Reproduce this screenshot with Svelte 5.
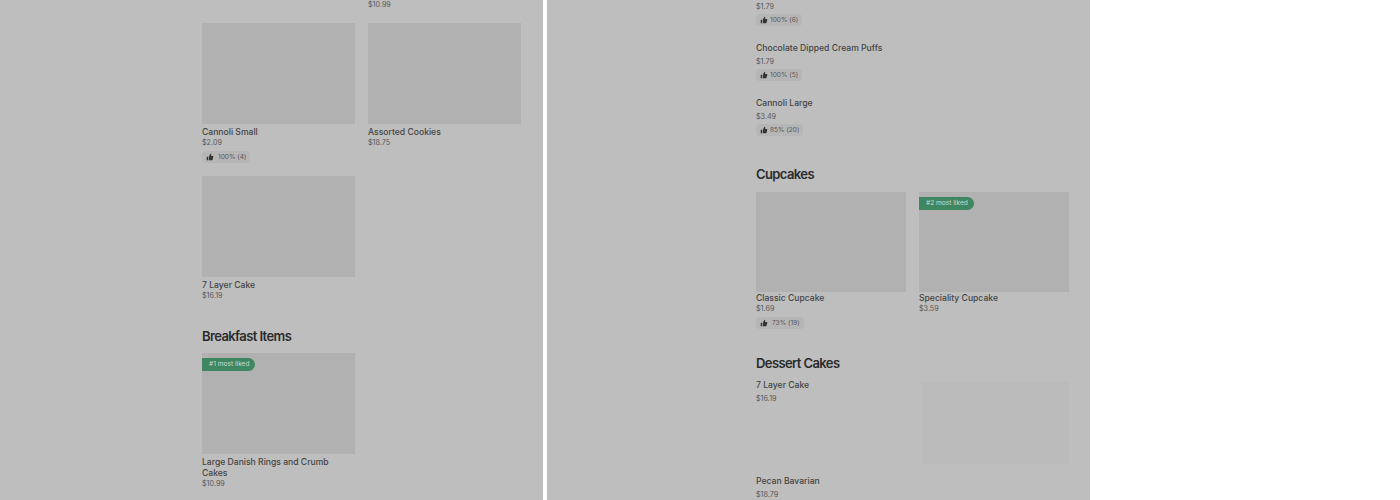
<script>
  const thumb = 'M1 5h2v5H1zM4 5l2-4c.8 0 1.3.6 1.2 1.4L7 4h2.2c.6 0 1 .6.8 1.2L9 9.4c-.1.4-.4.6-.8.6H4z';
</script>

{#snippet rating(text, wide)}
  <div class="rating" class:wide>
    <svg viewBox="0 0 11 11" width="8" height="8"><path d={thumb} /></svg>
    <span>{text}</span>
  </div>
{/snippet}

{#snippet card(name, price, score, badge, wide)}
  <div class="card">
    <div class="photo">
      {#if badge}<span class="badge">{badge}</span>{/if}
    </div>
    <div class="name">{name}</div>
    <div class="price">{price}</div>
    {#if score}{@render rating(score, wide)}{/if}
  </div>
{/snippet}

{#snippet row(name, price, score)}
  <div class="row">
    <div class="name">{name}</div>
    <div class="price roomy">{price}</div>
    {@render rating(score)}
  </div>
{/snippet}

<div class="page">
  <section class="panel left">
    <div class="grid top-cut">
      <div></div>
      <div class="price">$10.99</div>
    </div>
    <div class="grid first">
      {@render card('Cannoli Small', '$2.09', '100% (4)', null, true)}
      {@render card('Assorted Cookies', '$18.75')}
      {@render card('7 Layer Cake', '$16.19')}
    </div>
    <h2 class="breakfast">Breakfast Items</h2>
    <div class="grid">
      {@render card('Large Danish Rings and Crumb Cakes', '$10.99', null, '#1 most liked')}
    </div>
  </section>

  <section class="panel right">
    <div class="row cut">
      <div class="price">$1.79</div>
      {@render rating('100% (6)')}
    </div>
    {@render row('Chocolate Dipped Cream Puffs', '$1.79', '100% (5)')}
    {@render row('Cannoli Large', '$3.49', '85% (20)')}
    <h2 class="cupcakes">Cupcakes</h2>
    <div class="grid">
      {@render card('Classic Cupcake', '$1.69', '73% (19)', null, true)}
      {@render card('Speciality Cupcake', '$3.59', null, '#2 most liked')}
    </div>
    <h2 class="desserts">Dessert Cakes</h2>
    <div class="item">
      <div class="info">
        <div class="name">7 Layer Cake</div>
        <div class="price roomy">$16.19</div>
      </div>
      <div class="ghost"></div>
    </div>
    <div class="item-next">
      <div class="name">Pecan Bavarian</div>
      <div class="price roomy">$18.79</div>
    </div>
  </section>
</div>

<style>
  :global(body) {
    margin: 0;
    background: #fff;
  }

  .page {
    display: flex;
    gap: 4px;
    width: 1090px;
    height: 500px;
    overflow: hidden;
    font-family: Inter, 'Liberation Sans', sans-serif;
  }

  .panel {
    flex: 0 0 543px;
    box-sizing: border-box;
    height: 500px;
    overflow: hidden;
    background: #bebebe;
  }

  .left {
    padding-left: 202px;
    padding-right: 22px;
  }

  .right {
    padding-left: 209px;
    padding-right: 21px;
  }

  .grid {
    display: grid;
    grid-template-columns: 1fr 1fr;
    column-gap: 13px;
  }

  .top-cut {
    height: 23px;
  }

  .first {
    row-gap: 13px;
  }

  .first .card:nth-child(2) {
    align-self: start;
  }

  .photo {
    position: relative;
    height: 101px;
    background: #b1b1b1;
  }

  .right .photo {
    height: 100px;
  }

  .badge {
    position: absolute;
    top: 5px;
    left: 0;
    padding: 0 6px 0 7px;
    height: 13px;
    line-height: 13px;
    font-size: 6.6px;
    color: #c9ddd2;
    background: #3f8662;
    border-radius: 0 7px 7px 0;
    white-space: nowrap;
  }

  .name {
    margin-top: 2px;
    font-size: 8.6px;
    line-height: 11px;
    font-weight: 500;
    color: #444;
  }

  .left .card .name {
    margin-top: 3px;
  }

  .right .card .name,
  .item .name {
    margin-top: 1px;
  }

  .price {
    font-size: 7.2px;
    line-height: 10px;
    color: #585858;
  }

  .roomy {
    margin-top: 3px;
  }

  .rating {
    display: flex;
    align-items: center;
    gap: 2px;
    width: max-content;
    height: 12px;
    margin-top: 3px;
    padding: 0 4px;
    font-size: 6.6px;
    color: #585858;
    background: #b6b6b6;
    border-radius: 4px;
  }

  .row .rating {
    margin-top: 2px;
  }

  .rating.wide {
    gap: 4px;
  }

  .rating svg {
    fill: #333;
  }

  .row {
    margin-top: 17px;
  }

  .cut {
    margin-top: 2px;
  }

  h2 {
    margin: 0;
    font-size: 13px;
    line-height: 18px;
    font-weight: 600;
    letter-spacing: -0.6px;
    color: #2b2b2b;
  }

  .breakfast {
    margin: 26px 0 8px;
  }

  .cupcakes {
    margin: 29px 0 9px;
  }

  .desserts {
    margin: 25px 0 7px;
  }

  .item {
    display: flex;
    justify-content: space-between;
    height: 95px;
  }

  .ghost {
    width: 147px;
    height: 82px;
    margin-top: 3px;
    background: #bbb;
  }
</style>
